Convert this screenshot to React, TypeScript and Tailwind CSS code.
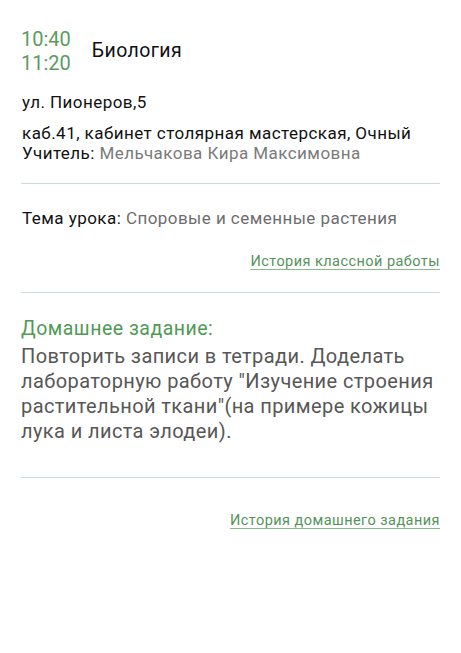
import React from 'react'

const font = { fontFamily: 'Roboto, "Noto Sans", Arial, sans-serif' }

function Divider() {
  return <div className="h-px bg-[#c9ddd6]" />
}

function HistoryLink({ label }: { label: string }) {
  return (
    <div className="flex justify-end">
      <a className="text-[14.5px] leading-[18px] tracking-[0.45px] text-[#55935a] underline underline-offset-[3px] decoration-[#8bb98e]">
        {label}
      </a>
    </div>
  )
}

export default function App() {
  return (
    <div className="w-[461px] h-[653px] bg-white overflow-hidden" style={font}>
      <div className="px-[21px]">
        {/* Lesson header */}
        <div className="flex items-center gap-[21px] pt-[27px]">
          <div className="flex flex-col text-[20px] leading-[24px] text-[#5a9c60]">
            <span>10:40</span>
            <span>11:20</span>
          </div>
          <div className="text-[19.5px] tracking-[0.4px] text-[#111]">Биология</div>
        </div>

        <div className="pl-[1px] tracking-[0.45px] text-[17px] leading-[20px] text-[#111]">
          <p className="mt-[17px]">ул. Пионеров,5</p>

          <div className="mt-[11px]">
            <p>каб.41, кабинет столярная мастерская, Очный</p>
            <p>
              Учитель: <span className="text-[#7a7a7a]">Мельчакова Кира Максимовна</span>
            </p>
          </div>
        </div>

        <div className="mt-[20px]">
          <Divider />
        </div>

        <p className="mt-[24px] pl-[1px] text-[17px] leading-[20px] tracking-[0.45px] text-[#111]">
          Тема урока: <span className="text-[#6d6d6d]">Споровые и семенные растения</span>
        </p>

        <div className="mt-[25px]">
          <HistoryLink label="История классной работы" />
        </div>

        <div className="mt-[21px]">
          <Divider />
        </div>

        {/* Homework */}
        <h2 className="mt-[24px] text-[19.5px] leading-[24px] tracking-[0.5px] text-[#4f9a55]">
          Домашнее задание:
        </h2>
        <p className="mt-[3px] text-[20px] leading-[25px] tracking-[0.4px] text-[#575757]">
          Повторить записи в тетради. Доделать лабораторную работу "Изучение строения растительной
          ткани"(на примере кожицы лука и листа элодеи).
        </p>

        <div className="mt-[33px]">
          <Divider />
        </div>

        <div className="mt-[34px]">
          <HistoryLink label="История домашнего задания" />
        </div>
      </div>
    </div>
  )
}
